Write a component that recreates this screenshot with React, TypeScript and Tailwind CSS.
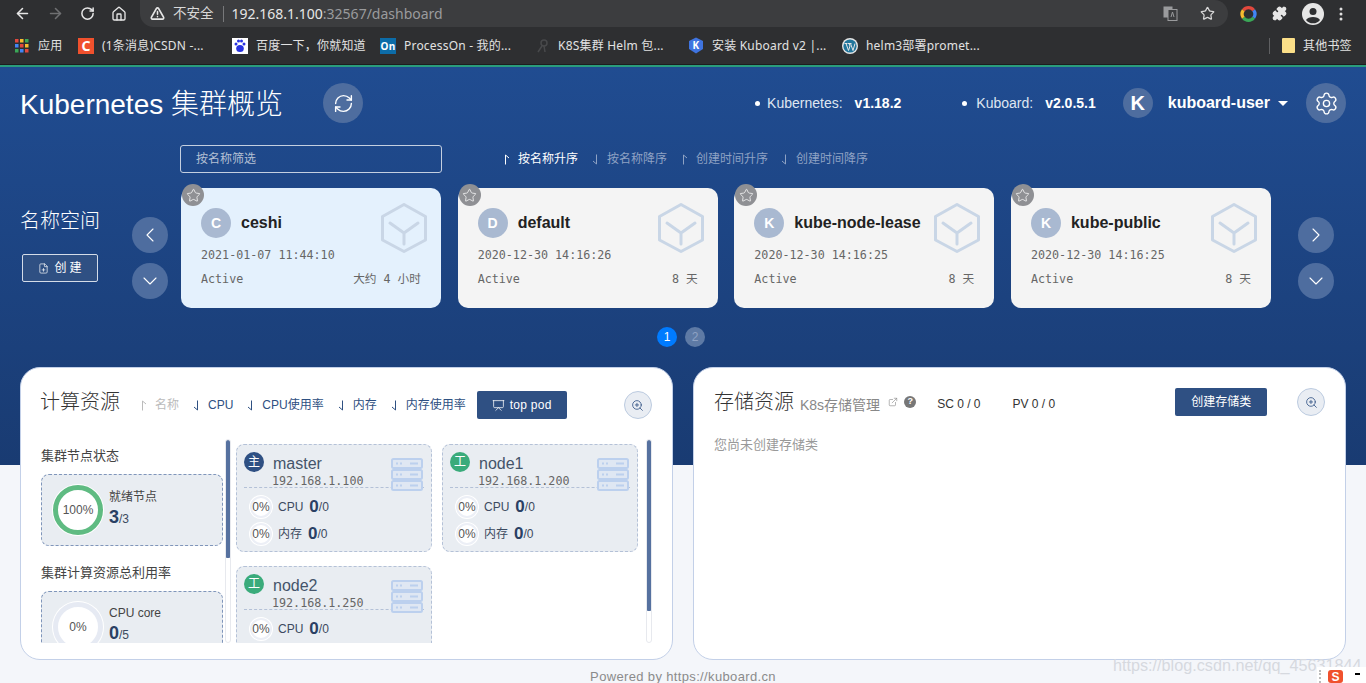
import React from "react";
import { ArrowLeft, ArrowRight, RotateCw, Home, TriangleAlert, Star, Puzzle, ChevronLeft, ChevronRight, ChevronDown, RefreshCw, Settings, FilePlus, ZoomIn, Presentation, ExternalLink } from "lucide-react";

const SANS = "font-['Liberation_Sans','Noto_Sans_CJK_SC',sans-serif]";
const MONO = "font-['DejaVu_Sans_Mono','Noto_Sans_CJK_SC',monospace]";
const CHROME = "font-['Noto_Sans','Noto_Sans_CJK_SC',sans-serif]";

function Harpoon({ down, className }: { down?: boolean; className?: string }) {
  return (
    <svg width="7" height="11" viewBox="0 0 7 11" fill="none" stroke="currentColor" strokeWidth="1" className={className}>
      {down ? <path d="M4.5 0.5V10L1 7" /> : <path d="M2.5 10.5V1L6 4" />}
    </svg>
  );
}

function Cube() {
  return (
    <svg width="46" height="50" viewBox="0 0 46 50" fill="none" stroke="#c9d6e6" strokeWidth="3" strokeLinejoin="round" strokeLinecap="round" className="shrink-0">
      <path d="M23 1.5L44.5 13.5V37L23 48.5L1.5 37V13.5Z" />
      <path d="M9 20L23 30L37 20M23 30V41" />
    </svg>
  );
}

function ServerIcon() {
  return (
    <svg width="32" height="33" viewBox="0 0 32 33" className="shrink-0">
      {[0, 11, 22].map((y) => (
        <g key={y}>
          <rect x="1" y={y + 1} width="30" height="9" rx="1.5" fill="#dfe7f3" stroke="#bcd0ee" strokeWidth="2" />
          <rect x="5" y={y + 4.5} width="2" height="2" fill="#bcd0ee" />
          <rect x="9" y={y + 4.5} width="2" height="2" fill="#bcd0ee" />
          <rect x="19" y={y + 4.5} width="8" height="2" fill="#bcd0ee" />
        </g>
      ))}
    </svg>
  );
}

function CircleBtn({ children, size = "w-9 h-9" }: { children: React.ReactNode; size?: string }) {
  return <div className={`${size} shrink-0 rounded-full bg-[#4e6d9f] flex items-center justify-center text-white`}>{children}</div>;
}

function NsCard({ letter, name, date, age, active }: { letter: string; name: string; date: string; age: string; active?: boolean }) {
  return (
    <div className={`relative w-[260px] h-[120px] rounded-[10px] pt-[15px] pl-[20px] pr-[14px] ${active ? "bg-[#e4f1fd]" : "bg-[#f4f4f4]"}`}>
      <div className="absolute left-px -top-1 w-[22px] h-[22px] rounded-full bg-[#8f9094] flex items-center justify-center">
        <Star size={15} strokeWidth={1.2} className="text-white" />
      </div>
      <div className="flex items-center h-[40px]">
        <div className="w-[30px] h-[30px] rounded-full bg-[#a9b9d1] flex items-center justify-center text-white text-[14px] font-bold">{letter}</div>
        <div className="ml-[10px] text-[16px] font-bold text-[#222]">{name}</div>
        <div className="ml-auto mt-[9px]"><Cube /></div>
      </div>
      <div className={`${MONO} mt-[4px] text-[11.7px] leading-[16px] text-[#666]`}>{date}</div>
      <div className={`${MONO} mt-[8px] pr-[6px] flex justify-between text-[11.7px] leading-[16px] text-[#666]`}>
        <span>Active</span>
        <span>{age}</span>
      </div>
    </div>
  );
}

function SortItem({ label, on, dim, down }: { label: string; on?: boolean; dim?: boolean; down?: boolean }) {
  return (
    <div className={`flex items-center gap-[8px] text-[12px] ${on ? "text-white" : dim ? "text-[#8ea2c4]" : ""}`}>
      <Harpoon down={down} />
      <span>{label}</span>
    </div>
  );
}

function Pct({ v }: { v: string }) {
  return (
    <div className="w-[24px] h-[24px] rounded-full bg-white p-[1px] shrink-0">
      <div className="w-full h-full rounded-full border-2 border-[#eceff6] flex items-center justify-center text-[12px] text-[#555]">{v}</div>
    </div>
  );
}

function Metric({ label, v }: { label: string; v: string }) {
  return (
    <div className="flex items-center h-[27px] pl-[5px]">
      <Pct v={v} />
      <span className="ml-[5px] text-[12px] text-[#3c4a60]">{label}</span>
      <span className="ml-[6px] text-[17px] font-bold text-[#2a4064]">0</span>
      <span className="text-[12px] text-[#3c4a60]">/0</span>
    </div>
  );
}

function NodeCard({ badge, color, name, ip }: { badge: string; color: string; name: string; ip: string }) {
  return (
    <div className="w-[196px] h-[108px] shrink-0 rounded-[8px] border border-dashed border-[#b4c1d7] bg-[#e9edf2] px-[7px] pt-[7px]">
      <div className="flex h-[36px] border-b border-dashed border-[#b4c1d7] relative">
        <div className={`w-[20px] h-[20px] rounded-full ${color} text-white text-[12px] flex items-center justify-center shrink-0`}>{badge}</div>
        <div className="ml-[9px] flex-1">
          <div className="text-[16px] leading-[22px] text-[#44546a] mt-[1px]">{name}</div>
          <div className={`${MONO} -ml-px text-[11.7px] leading-[13px] text-[#666]`}>{ip}</div>
        </div>
        <div className="mr-[1px] mt-[6px]"><ServerIcon /></div>
      </div>
      <div className="pt-[5px]">
        <Metric label="CPU" v="0%" />
        <Metric label="内存" v="0%" />
      </div>
    </div>
  );
}

function Scrollbar({ thumb }: { thumb: string }) {
  return (
    <div className="w-[6px] h-full shrink-0 rounded-[3px] border border-[#e7e9ee] bg-white overflow-hidden">
      <div className={`${thumb} bg-[#56719f] rounded-[3px] -mx-px`} />
    </div>
  );
}

function Ring({ color, text }: { color: string; text: string }) {
  return (
    <div className={`w-[50px] h-[50px] rounded-full border-[5px] ${color} ring-1 ring-white bg-white flex items-center justify-center text-[12px] text-[#555] shrink-0`}>{text}</div>
  );
}

function Bookmark({ w, icon, text }: { w: string; icon: React.ReactNode; text: string }) {
  return (
    <div className={`${w} shrink-0 flex items-center gap-[8px] text-[12px] tracking-[0.2px] text-[#e2e2e2] whitespace-nowrap`}>
      {icon}
      <span>{text}</span>
    </div>
  );
}

export default function App() {
  return (
    <div className={`${SANS} relative w-[1366px] h-[683px] overflow-hidden bg-[#f4f6fa]`}>
      {/* browser toolbar */}
      <div className={`${CHROME} h-[27px] bg-[#2e2f31] flex items-center text-[#e6e6e6]`}>
        <div className="flex items-center pl-[14px] gap-[16px] w-[140px]">
          <ArrowLeft size={17} strokeWidth={2.2} />
          <ArrowRight size={17} strokeWidth={2.2} className="text-[#6f7072]" />
          <RotateCw size={15} strokeWidth={2.4} />
          <Home size={16} strokeWidth={2} />
        </div>
        <div className="w-[1088px] h-[27px] rounded-r-[14px] rounded-bl-[14px] bg-[#3c3d3f] flex items-center pl-[10px]">
          <TriangleAlert size={15} strokeWidth={2.5} className="text-[#e6e6e6]" />
          <span className="ml-[8px] text-[13.5px] text-[#d8d8d8]">不安全</span>
          <span className="ml-[9px] mr-[8px] w-px h-[16px] bg-[#77787a]" />
          <span className="text-[14px]">
            <span className="text-[#e6e6e6]">192.168.1.100</span>
            <span className="text-[#9a9b9d]">:32567/dashboard</span>
          </span>
          <svg width="15" height="15" viewBox="0 0 15 15" className="ml-auto mr-[22px]">
            <rect x="0.5" y="0.5" width="9" height="11" fill="#9a9b9d" />
            <rect x="5" y="3.5" width="9" height="11" fill="#3c3d3f" stroke="#9a9b9d" />
            <path d="M8 11l1.5-5 1.5 5" stroke="#9a9b9d" fill="none" />
          </svg>
          <Star size={15} strokeWidth={2} className="mr-[13px] text-[#d8d8d8]" />
        </div>
        <div className="flex items-center pl-[12px] gap-[14px]">
          <svg width="17" height="18" viewBox="0 0 18 18" fill="none" strokeWidth="3.5">
            <path d="M3.5 5a7 7 0 0 1 11 0" stroke="#e2483d" />
            <path d="M14.5 5a7 7 0 0 1 0 8" stroke="#4285f4" />
            <path d="M14.5 13a7 7 0 0 1-11 0" stroke="#3aa757" />
            <path d="M3.5 13a7 7 0 0 1 0-8" stroke="#f6bb2f" />
          </svg>
          <Puzzle size={15} className="text-[#e6e6e6] fill-[#e6e6e6] ml-[1px]" />
          <svg width="22" height="22" viewBox="0 0 22 22" className="ml-[1px]">
            <circle cx="11" cy="11" r="11" fill="#e6e6e6" />
            <circle cx="11" cy="8.5" r="3.5" fill="#2e2f31" />
            <path d="M4 17c2-4 12-4 14 0a9 9 0 0 1-14 0z" fill="#2e2f31" />
          </svg>
          <svg width="4" height="14" viewBox="0 0 4 14" fill="#e0e0e0" className="ml-[1px]">
            <circle cx="2" cy="2" r="1.5" /><circle cx="2" cy="7" r="1.5" /><circle cx="2" cy="12" r="1.5" />
          </svg>
        </div>
      </div>
      {/* bookmarks */}
      <div className={`${CHROME} h-[38px] bg-[#2e2f31] border-b border-[#1d1d1f] flex items-center pl-[15px]`}>
        <Bookmark w="w-[63px]" text="应用" icon={
          <svg width="15" height="14" viewBox="0 0 15 14">
            {[0, 5, 10].map((x, i) => [0, 5, 10].map((y, j) => (
              <rect key={`${x}-${y}`} x={x} y={y} width="3.5" height="3.5" fill={["#e2483d", "#4285f4", "#3aa757", "#f6bb2f", "#e2483d", "#4285f4", "#3aa757", "#f6bb2f", "#e2483d"][i * 3 + j]} />
            )))}
          </svg>
        } />
        <Bookmark w="w-[154px]" text="(1条消息)CSDN -..." icon={<div className="w-[16px] h-[16px] bg-[#f0512d] text-white text-[14px] leading-[16px] text-center font-bold">C</div>} />
        <Bookmark w="w-[148px]" text="百度一下，你就知道" icon={
          <svg width="16" height="16" viewBox="0 0 16 16">
            <rect width="16" height="16" fill="#fff" />
            <circle cx="4" cy="6" r="1.5" fill="#2932e1" /><circle cx="12" cy="6" r="1.5" fill="#2932e1" />
            <circle cx="6.5" cy="3" r="1.5" fill="#2932e1" /><circle cx="9.5" cy="3" r="1.5" fill="#2932e1" />
            <ellipse cx="8" cy="10.5" rx="3.8" ry="3.5" fill="#2932e1" />
          </svg>
        } />
        <Bookmark w="w-[155px]" text="ProcessOn - 我的..." icon={<div className="w-[16px] h-[16px] bg-[#0c6ca8] text-white text-[10px] leading-[16px] text-center font-bold">On</div>} />
        <Bookmark w="w-[153px]" text="K8S集群 Helm 包..." icon={
          <svg width="15" height="16" viewBox="0 0 15 16" fill="none" stroke="#48494b" strokeWidth="1.5"><circle cx="9" cy="5" r="3" /><path d="M7 8L3 14M9 8l1 6" /></svg>
        } />
        <Bookmark w="w-[154px]" text="安装 Kuboard v2 |..." icon={
          <svg width="16" height="17" viewBox="0 0 16 17">
            <path d="M8 0.5L15 4V12L8 16.5L1 12V4Z" fill="#3f74e0" />
            <text x="8" y="12" fontSize="10" fontWeight="bold" fill="#fff" textAnchor="middle">K</text>
          </svg>
        } />
        <Bookmark w="w-[427px]" text="helm3部署promet..." icon={
          <svg width="16" height="16" viewBox="0 0 16 16">
            <circle cx="8" cy="8" r="8" fill="#e6e6e6" />
            <circle cx="8" cy="8" r="6.6" fill="#21759b" />
            <path d="M2.5 5.5h3M4 5.5l2.5 7 1.5-4.5-1-2.5M6 5.5h3.5M8.5 5.5l2.5 7 2-7" stroke="#e6e6e6" strokeWidth="1" fill="none" />
          </svg>
        } />
        <div className="w-px h-[16px] bg-[#5f6062] mr-[12px]" />
        <Bookmark w="w-[70px]" text="其他书签" icon={<div className="w-[13px] h-[15px] bg-[#fbdf88] rounded-[1px]" />} />
      </div>
      <div className="h-[2px] bg-[#2a9d7c]" />

      {/* blue header */}
      <div className="h-[398px] pt-[16px] bg-gradient-to-b from-[#204c91] to-[#193b72] text-white">
        <div className="flex items-center h-[40px] px-5">
          <div className="w-[262px] shrink-0 text-[28px] mt-[4px] font-light whitespace-nowrap">Kubernetes 集群概览</div>
          <div className="ml-[41px]">
            <CircleBtn size="w-10 h-10"><RefreshCw size={21} strokeWidth={1.6} /></CircleBtn>
          </div>
          <div className="ml-auto flex items-center text-[14px]">
            <span className="w-[5px] h-[5px] rounded-full bg-white" />
            <span className="ml-[7px] text-[#dfe6f1]">Kubernetes:</span>
            <span className="ml-[12px] font-bold">v1.18.2</span>
            <span className="ml-[61px] w-[5px] h-[5px] rounded-full bg-white" />
            <span className="ml-[9px] text-[#dfe6f1]">Kuboard:</span>
            <span className="ml-[12px] font-bold">v2.0.5.1</span>
            <div className="ml-[27px] w-[30px] h-[30px] rounded-full bg-[#4e6d9f] flex items-center justify-center text-[20px] font-bold">K</div>
            <span className="ml-[15px] text-[16px] font-bold whitespace-nowrap">kuboard-user</span>
            <span className="ml-[8px] w-0 h-0 border-x-[5px] border-x-transparent border-t-[5px] border-t-white" />
            <div className="ml-[18px]">
              <CircleBtn size="w-10 h-10"><Settings size={25} strokeWidth={1.3} /></CircleBtn>
            </div>
          </div>
        </div>

        <div className="flex items-center mt-[22px] pl-[180px]">
          <div className="w-[262px] h-[28px] rounded-[3px] border border-[#c4cfe0] pl-[15px] flex items-center text-[12px] text-[#b4c0d4]">按名称筛选</div>
          <div className="ml-[61px] flex items-center">
            <SortItem label="按名称升序" on />
            <div className="ml-[14px]"><SortItem label="按名称降序" dim down /></div>
            <div className="ml-[14px]"><SortItem label="创建时间升序" dim /></div>
            <div className="ml-[13px]"><SortItem label="创建时间降序" dim down /></div>
          </div>
        </div>

        <div className="flex mt-[15px] pl-5">
          <div className="w-[112px] shrink-0 pt-[21px]">
            <div className="text-[20px] leading-[24px] font-light">名称空间</div>
            <div className="mt-[21px] ml-[2px] w-[76px] h-[28px] rounded-[2px] border border-[#d4dce8] bg-[#2f5083] flex items-center justify-center gap-[5px] text-[12px]">
              <FilePlus size={11} strokeWidth={1.5} />
              <span className="tracking-[3px] -mr-[3px]">创建</span>
            </div>
          </div>
          <div className="flex flex-col gap-[10px] pt-[29px] w-[36px] shrink-0">
            <CircleBtn><ChevronLeft size={24} strokeWidth={1.1} /></CircleBtn>
            <CircleBtn><ChevronDown size={24} strokeWidth={1.1} /></CircleBtn>
          </div>
          <div className="ml-[13px] w-[1090px] flex justify-between shrink-0">
            <NsCard active letter="C" name="ceshi" date="2021-01-07 11:44:10" age="大约 4 小时" />
            <NsCard letter="D" name="default" date="2020-12-30 14:16:26" age="8 天" />
            <NsCard letter="K" name="kube-node-lease" date="2020-12-30 14:16:25" age="8 天" />
            <NsCard letter="K" name="kube-public" date="2020-12-30 14:16:25" age="8 天" />
          </div>
          <div className="ml-[27px] flex flex-col gap-[10px] pt-[29px] w-[36px] shrink-0">
            <CircleBtn><ChevronRight size={24} strokeWidth={1.1} /></CircleBtn>
            <CircleBtn><ChevronDown size={24} strokeWidth={1.1} /></CircleBtn>
          </div>
        </div>

        <div className="flex justify-center gap-[8px] mt-[19px] pr-[4px]">
          <div className="w-[20px] h-[20px] rounded-full bg-[#007bff] flex items-center justify-center text-[12px]">1</div>
          <div className="w-[20px] h-[20px] rounded-full bg-[#5e7aa5] flex items-center justify-center text-[12px] text-[#8ea2c4]">2</div>
        </div>
      </div>

      {/* panels */}
      <div className="flex gap-5 px-5 -mt-[98px] relative">
        <div className="flex-1 h-[293px] rounded-[20px] border border-[#c3d0e8] bg-white pl-[20px] pt-[23px]">
          <div className="flex items-center h-[28px]">
            <div className="text-[20px] font-light text-[#333] leading-[28px] w-[99px] shrink-0 -ml-px -mt-[6px]">计算资源</div>
            <div className="flex items-center text-[12px] text-[#2e5082] ml-px">
              <div className="flex items-center gap-[8px] text-[#bbb]"><Harpoon /><span>名称</span></div>
              <div className="ml-[14px] flex items-center gap-[8px]"><Harpoon down /><span>CPU</span></div>
              <div className="ml-[14px] flex items-center gap-[8px]"><Harpoon down /><span>CPU使用率</span></div>
              <div className="ml-[14px] flex items-center gap-[8px]"><Harpoon down /><span>内存</span></div>
              <div className="ml-[14px] flex items-center gap-[8px]"><Harpoon down /><span>内存使用率</span></div>
            </div>
            <div className="ml-[11px] w-[90px] h-[28px] rounded-[2px] bg-[#2f5083] text-white text-[12px] flex items-center justify-center gap-[5px]">
              <Presentation size={13} strokeWidth={1.4} />
              <span className="tracking-[0.3px]">top pod</span>
            </div>
            <div className="ml-[57px] w-[28px] h-[28px] rounded-full bg-[#e9edf3] border border-[#bccbe0] flex items-center justify-center text-[#2f5083]">
              <ZoomIn size={13} strokeWidth={1.5} />
            </div>
          </div>

          <div className="mt-[20px] h-[204px] overflow-hidden flex">
            <div className="w-[182px] shrink-0">
              <div className="text-[13px] leading-[16px] text-[#444] pt-[9px]">集群节点状态</div>
              <div className="mt-[10px] h-[72px] rounded-[8px] border border-dashed border-[#7f95ba] bg-[#e9edf2] flex items-center pl-[11px]">
                <Ring color="border-[#5fbb82]" text="100%" />
                <div className="ml-[6px]">
                  <div className="text-[12px] leading-[16px] text-[#444]">就绪节点</div>
                  <div className="text-[18px] leading-[24px] font-bold text-[#2a4064]">3<span className="text-[12px] font-normal text-[#3c4a60]">/3</span></div>
                </div>
              </div>
              <div className="mt-[19px] text-[13px] leading-[16px] text-[#444]">集群计算资源总利用率</div>
              <div className="mt-[10px] h-[72px] rounded-[8px] border border-dashed border-[#7f95ba] bg-[#e9edf2] flex items-start pl-[11px] pt-[10px]">
                <Ring color="border-[#e6eaf3]" text="0%" />
                <div className="ml-[6px] mt-[3px]">
                  <div className="text-[12px] leading-[16px] text-[#444]">CPU core</div>
                  <div className="text-[18px] leading-[24px] font-bold text-[#2a4064]">0<span className="text-[12px] font-normal text-[#3c4a60]">/5</span></div>
                </div>
              </div>
            </div>
            <div className="ml-[2px]"><Scrollbar thumb="h-[118px]" /></div>
            <div className="ml-[5px] w-[402px] shrink-0 pt-[5px] grid grid-cols-[196px_196px] gap-x-[10px] gap-y-[14px] content-start">
              <NodeCard badge="主" color="bg-[#2f5083]" name="master" ip="192.168.1.100" />
              <NodeCard badge="工" color="bg-[#3aab7b]" name="node1" ip="192.168.1.200" />
              <NodeCard badge="工" color="bg-[#3aab7b]" name="node2" ip="192.168.1.250" />
            </div>
            <div className="ml-[8px]"><Scrollbar thumb="h-[171px]" /></div>
          </div>
        </div>

        <div className="flex-1 h-[293px] rounded-[20px] border border-[#c3d0e8] bg-white pl-[20px] pt-[20px]">
          <div className="flex items-center h-[28px]">
            <div className="text-[20px] font-light text-[#333] whitespace-nowrap">存储资源</div>
            <div className="ml-[6px] mt-[6px] text-[14px] text-[#888] whitespace-nowrap">K8s存储管理</div>
            <ExternalLink size={10} strokeWidth={1.5} className="ml-[8px] text-[#888]" />
            <div className="ml-[6px] w-[12px] h-[12px] rounded-full bg-[#777] text-white text-[9px] font-bold flex items-center justify-center">?</div>
            <div className="ml-[21px] mt-[3px] text-[12px] text-[#333] whitespace-nowrap">SC 0 / 0</div>
            <div className="ml-[32px] mt-[3px] text-[12px] text-[#333] whitespace-nowrap">PV 0 / 0</div>
            <div className="ml-[120px] w-[92px] h-[28px] rounded-[2px] bg-[#2f5083] text-white text-[12px] flex items-center justify-center">创建存储类</div>
            <div className="ml-[30px] w-[28px] h-[28px] rounded-full bg-[#e9edf3] border border-[#bccbe0] flex items-center justify-center text-[#2f5083]">
              <ZoomIn size={13} strokeWidth={1.5} />
            </div>
          </div>
          <div className="mt-[20px] text-[13px] leading-[18px] text-[#999]">您尚未创建存储类</div>
        </div>
      </div>

      <div className="mt-[8px] text-center text-[13px] leading-[18px] tracking-[0.35px] text-[#8b8b8b]">Powered by https://kuboard.cn</div>

      {/* overlays */}
      <div className="absolute left-[1113px] top-[654px] text-[16.2px] leading-[22px] text-[#d6d9df] whitespace-nowrap">https://blog.csdn.net/qq_45631844</div>
      <div className="absolute left-[1317px] top-[667px] w-[49px] h-[16px] bg-white flex items-start pl-[2px] pt-[3px]">
        <div className="w-[2px] h-[13px] border-l-2 border-dotted border-[#bbb]" />
        <div className="ml-[7px] w-[15px] h-[13px] rounded-[3px] bg-[#f0512d] text-white text-[12px] leading-[14px] font-bold text-center">S</div>
        <div className="ml-[12px] mt-[3px] w-[5px] h-[2px] bg-black" />
      </div>
    </div>
  );
}
